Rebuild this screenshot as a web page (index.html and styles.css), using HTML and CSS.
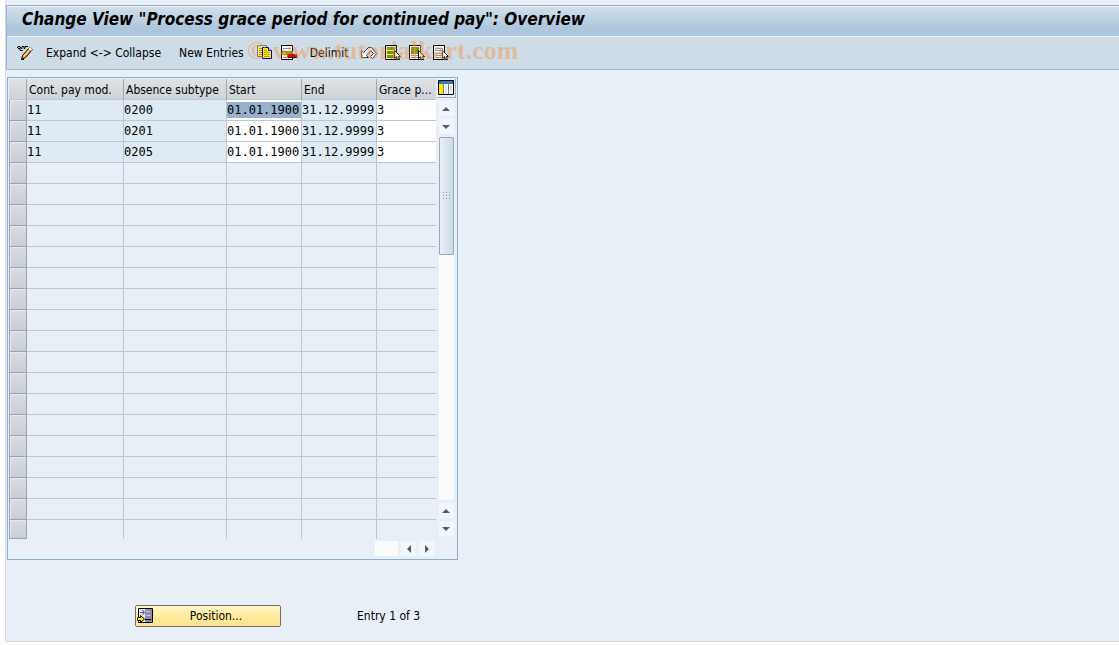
FILE: index.html
```html
<!DOCTYPE html>
<html lang="en">
  <head>
    <meta charset="utf-8">
    <title>Change View "Process grace period for continued pay": Overview</title>
    <link rel="stylesheet" href="styles.css">
  </head>
  <body>
    <div class="window">
      <header>
        <h1 class="title">Change View "Process grace period for continued pay": Overview</h1>
        <div class="toolbar">
          <button class="tool" aria-label="Display/Change">
            <svg class="icon" viewBox="0 0 16 16"><path d="M0 2.500h1v-1h2v1h1v1h1v-2h2v2h1v-2h3M1 3.500h2v2h3" fill="none" stroke="#000"/><path d="M4.500 14.500l1-4 7-8 3 2-7 8z" fill="#f7a832" stroke="#000"/><path d="M7 11l6-7" stroke="#ffe9a0"/><path d="M12 3l3 2" stroke="#fff" stroke-width="2"/><path d="M4 15h3v-2z" fill="#000"/></svg>
          </button>
          <button class="tool tool-text">Expand &lt;-&gt; Collapse</button>
          <button class="tool tool-text">New Entries</button>
          <button class="tool" aria-label="Copy As">
            <svg class="icon" viewBox="0 0 16 16"><path d="M.5.5h9v11h-9z" fill="#ffef7a" stroke="#77776a"/><path d="M2 3.500h3M2 5.500h3M2 7.500h3M2 9.500h3" stroke="#a89200"/><path d="M5.500 2.500h6l3 3v8h-9z" fill="#fff200" stroke="#0000d8"/><path d="M11.500 2.500v3h3" fill="#fff" stroke="#0000d8"/><path d="M7 5.500h3M7 7.500h6M7 9.500h6M7 11.500h6" stroke="#c0a800"/></svg>
          </button>
          <button class="tool" aria-label="Delete">
            <svg class="icon" viewBox="0 0 16 16"><path d="M.5.5h11v14H.5z" fill="#fff" stroke="#000"/><path d="M2 3.500h8M2 12.500h5" stroke="#8a84b8"/><path d="M1 6h11v4H1z" fill="#779b12"/><path d="M2 8.500h3" stroke="#c4d671"/><path d="M7 9h9v4H7z" fill="#000"/><path d="M6 9h9v3H6z" fill="#f00000"/></svg>
          </button>
          <button class="tool tool-text">Delimit</button>
          <button class="tool" aria-label="Undo Change">
            <svg class="icon" viewBox="0 0 16 16"><path d="M.5 5.500v7h7l-2-2 4-5 3 3-3 3 2 2 4-5-5-6h-3l-5 5z" fill="#fff" stroke="#1c1c70"/></svg>
          </button>
          <button class="tool" aria-label="Select All">
            <svg class="icon" viewBox="0 0 16 16"><path d="M.5.5h11v14H.5z" fill="#e9f3a4" stroke="#000"/><path d="M2 2h8v3H2zM2 6h8v3H2zM2 10h8v3H2z" fill="#6d9500"/><path d="M9.500 5.500v8l2-2 1 3h2l-1-3h2z" fill="#fff" stroke="#000"/></svg>
          </button>
          <button class="tool" aria-label="Select Block">
            <svg class="icon" viewBox="0 0 16 16"><path d="M.5.5h11v14H.5z" fill="#fff" stroke="#000"/><path d="M2 2h8v7H2z" fill="#6d9500"/><path d="M2 10.500h7M2 12.500h7" stroke="#7d91aa"/><path d="M9.500 5.500v8l2-2 1 3h2l-1-3h2z" fill="#fff" stroke="#000"/></svg>
          </button>
          <button class="tool" aria-label="Deselect All">
            <svg class="icon" viewBox="0 0 16 16"><path d="M.5.5h11v14H.5z" fill="#fff" stroke="#000"/><path d="M2 3.500h8M2 5.500h8M2 8.500h7M2 10.500h7M2 12.500h7" stroke="#7d91aa"/><path d="M9.500 5.500v8l2-2 1 3h2l-1-3h2z" fill="#fff" stroke="#000"/></svg>
          </button>
          <span class="watermark">© www.tutorialkart.com</span>
        </div>
      </header>

      <main>
        <div class="frame">
          <table class="grid" id="grid">
            <colgroup>
              <col class="col-select">
              <col class="col-pay">
              <col class="col-absence">
              <col class="col-date">
              <col class="col-date">
              <col class="col-grace">
            </colgroup>
            <thead>
              <tr>
                <th></th>
                <th>Cont. pay mod.</th>
                <th>Absence subtype</th>
                <th>Start</th>
                <th>End</th>
                <th>Grace p...</th>
              </tr>
            </thead>
            <tbody>
              <tr class="filled">
                <td><button class="row-select" aria-label="Select row 1"></button></td>
                <td>11</td>
                <td>0200</td>
                <td><input class="selected" aria-label="Start" value="01.01.1900"></td>
                <td>31.12.9999</td>
                <td><input aria-label="Grace period" value="3"></td>
              </tr>
              <tr class="filled">
                <td><button class="row-select" aria-label="Select row 2"></button></td>
                <td>11</td>
                <td>0201</td>
                <td><input aria-label="Start" value="01.01.1900"></td>
                <td>31.12.9999</td>
                <td><input aria-label="Grace period" value="3"></td>
              </tr>
              <tr class="filled">
                <td><button class="row-select" aria-label="Select row 3"></button></td>
                <td>11</td>
                <td>0205</td>
                <td><input aria-label="Start" value="01.01.1900"></td>
                <td>31.12.9999</td>
                <td><input aria-label="Grace period" value="3"></td>
              </tr>
            </tbody>
          </table>

          <div class="side">
            <button class="settings" aria-label="Table settings">
              <svg class="icon" viewBox="0 0 16 16"><path d="M.5.5h15v14H.5z" fill="#fff" stroke="#000"/><path d="M1 1h14v3H1z" fill="#2878c8"/><path d="M1 4h4v10H1z" fill="#ffe800"/><path d="M5.500 1v13M10.500 1v13" stroke="#777"/><path d="M8 5v9M13 5v9" stroke="#dde3ea" stroke-width="2"/></svg>
            </button>
            <button class="arrow" aria-label="Page up"><svg viewBox="0 0 8 8"><path d="M0 6l4-4 4 4z"/></svg></button>
            <button class="arrow" aria-label="Line up"><svg viewBox="0 0 8 8"><path d="M0 2h8L4 6z"/></svg></button>
            <div class="track">
              <div class="thumb"><svg viewBox="0 0 7 8"><path d="M0 0h1v1H0zM3 0h1v1H3zM6 0h1v1H6zM0 3h1v1H0zM3 3h1v1H3zM6 3h1v1H6zM0 6h1v1H0zM3 6h1v1H3zM6 6h1v1H6z"/></svg></div>
            </div>
            <button class="arrow" aria-label="Line down"><svg viewBox="0 0 8 8"><path d="M0 6l4-4 4 4z"/></svg></button>
            <button class="arrow" aria-label="Page down"><svg viewBox="0 0 8 8"><path d="M0 2h8L4 6z"/></svg></button>
          </div>

          <div class="bottom">
            <div class="track-h"></div>
            <button class="arrow" aria-label="Scroll left"><svg viewBox="0 0 8 8"><path d="M6 0v8L2 4z"/></svg></button>
            <button class="arrow" aria-label="Scroll right"><svg viewBox="0 0 8 8"><path d="M2 0v8l4-4z"/></svg></button>
          </div>
        </div>

        <div class="footer">
          <button class="position">
            <svg class="icon" viewBox="0 0 16 16"><path d="M1.500.5h14v14h-14z" fill="#e4ebf5" stroke="#000"/><path d="M8 1h7v13H8z" fill="#8c8cb4"/><path d="M9 3.500h4M9 7.500h4" stroke="#c8c8e2"/><path d="M8 11.500h6" stroke="#000"/><path d="M3 4.500h4M5.500 2l2 2.500-2 2.500" fill="none" stroke="#555"/><path d="M.5 9.500h3v-2l4 3.500-4 3.500v-2h-3z" fill="#ffe600" stroke="#000"/></svg>
            <span>Position...</span>
          </button>
          <span>Entry 1 of 3</span>
        </div>
      </main>
    </div>
    <script>
      let tbody = document.getElementById('grid').tBodies[0];

      // empty rows below the entries
      for (let i = 4; i <= 21; i++) {
        let row = tbody.insertRow();

        for (let j = 0; j < 6; j++) {
          row.insertCell();
        }

        let button = document.createElement('button');
        button.className = 'row-select';
        button.setAttribute('aria-label', 'Select row ' + i);

        row.cells[0].append(button);
      }
    </script>
  </body>
</html>
```
FILE: styles.css
```css
* { box-sizing: border-box; }

body {
  display: flex;
  min-height: 100vh;
  margin: 0;
  padding: 0 0 3px 5px;

  background: #fff;
  color: #000;
  font: 12px/16px "DejaVu Sans Condensed", "DejaVu Sans", sans-serif;
}

button,
input {
  margin: 0;
  padding: 0;
  border: 0;
  border-radius: 0;

  background: none;
  color: inherit;
  font: inherit;
}

svg {
  display: block;
  flex: none;
}

.icon {
  width: 16px;
  height: 16px;
}

.window {
  flex: 1;
  padding-top: 5px;

  border-left: 1px solid #d3dae6;
  border-bottom: 1px solid #d0d8e4;
  background: #e8eff6;
}

header {
  border-top: 1px solid #9fa6b8;
  border-left: 1px solid #a0b4ca;
  border-bottom: 1px solid #a4b6c8;
}

.title {
  margin: 0;
  padding: 2px 15px 6px;

  border-top: 1px solid #edf3f9;
  border-bottom: 1px solid #edf3f9;
  background: linear-gradient(#cfdeed, #bbd0de 50%, #b0c7df 65%, #acc4dd);
  font-size: 17px;
  font-style: italic;
  font-weight: bold;
  line-height: 21px;
}

.toolbar {
  display: flex;
  position: relative;
  align-items: center;
  gap: 8px;
  height: 32px;
  padding: 0 10px;

  background: #cedce7;
}

.tool-text {
  padding: 0 5px;

  white-space: nowrap;
}

.watermark {
  position: absolute;
  left: 240px;
  top: 0;

  color: #f09c54;
  font: bold 26px/28px "Liberation Serif", serif;
  opacity: .5;
  pointer-events: none;
}

main { padding: 7px 1px; }

.frame {
  display: inline-grid;
  grid-template-columns: auto 20px;
  grid-template-rows: auto 19px;

  padding: 1px;

  border: 1px solid #8eadc8;
}

.grid {
  width: 427px;

  border-collapse: separate;
  border-spacing: 0;
  table-layout: fixed;
}

.col-select { width: 18px; }
.col-pay { width: 97px; }
.col-absence { width: 103px; }
.col-date { width: 75px; }
.col-grace { width: 59px; }

th {
  height: 21px;
  padding: 1px 0 0 2px;

  border-right: 1px solid #9ca7b4;
  border-bottom: 1px solid #bdc6d5;
  background: linear-gradient(#dfe2e5, #ced3d8);
  font-weight: normal;
  text-align: left;
  white-space: nowrap;
}

td {
  height: 21px;
  padding: 0;

  border-right: 1px solid #bdc6d5;
  border-bottom: 1px solid #bdc6d5;
  font: 12px/16px "DejaVu Sans Mono", monospace;
  white-space: nowrap;
}

th:last-child,
td:last-child { border-right: 0; }

td:first-child { border: 0; }

tbody tr:last-child td {
  height: 19px;

  border-bottom: 0;
}

.filled td { background: #deebf5; }

td input {
  display: block;
  width: 100%;
  height: 16px;
}

.filled td:has(input) { background: #fff; }

.filled .selected { background: #97b1cf; }

.row-select {
  display: block;
  width: 18px;
  height: 21px;

  border: 1px solid #98a2b2;
  border-top: 0;
  background: linear-gradient(#d9dce0, #c9cdd6);
  box-shadow: inset 1px 1px #e6e9ec;
}

tr:last-child .row-select { height: 19px; }

.side {
  display: flex;
  flex-direction: column;
  align-items: center;
  gap: 3px;

  padding-bottom: 3px;
}

.settings {
  padding: 1px;

  border-right: 1px solid #a4adb8;
  border-bottom: 1px solid #a4adb8;
}

.arrow {
  display: flex;
  align-items: center;
  justify-content: center;
  flex: none;
  width: 15px;
  height: 15px;

  background: #f3f6fb;
}

.arrow svg {
  width: 8px;
  height: 8px;

  fill: #4d6071;
}

.track {
  flex: 1;
  width: 15px;

  background: #fafbfc;
}

.thumb {
  display: flex;
  align-items: center;
  justify-content: center;
  height: 118px;

  border: 1px solid #98a9bb;
  border-radius: 1px;
  background: linear-gradient(90deg, #e9f0f6, #cddbe7);
}

.thumb svg {
  width: 7px;
  height: 8px;

  fill: #8c9daf;
}

.bottom {
  display: flex;
  align-items: center;
  justify-content: flex-end;
  gap: 3px;

  padding-right: 2px;
}

.track-h {
  width: 23px;
  height: 15px;

  background: #fafbfc;
}

.footer {
  display: flex;
  align-items: center;
  gap: 76px;

  padding: 45px 128px 0;
}

.position {
  display: flex;
  align-items: center;
  width: 146px;
  height: 22px;
  padding: 0 1px;

  border: 1px solid #70706c;
  border-radius: 2px;
  background: linear-gradient(#fff6cc, #ffec9c 50%, #fbe490);
}

.position span { flex: 1; }
```
